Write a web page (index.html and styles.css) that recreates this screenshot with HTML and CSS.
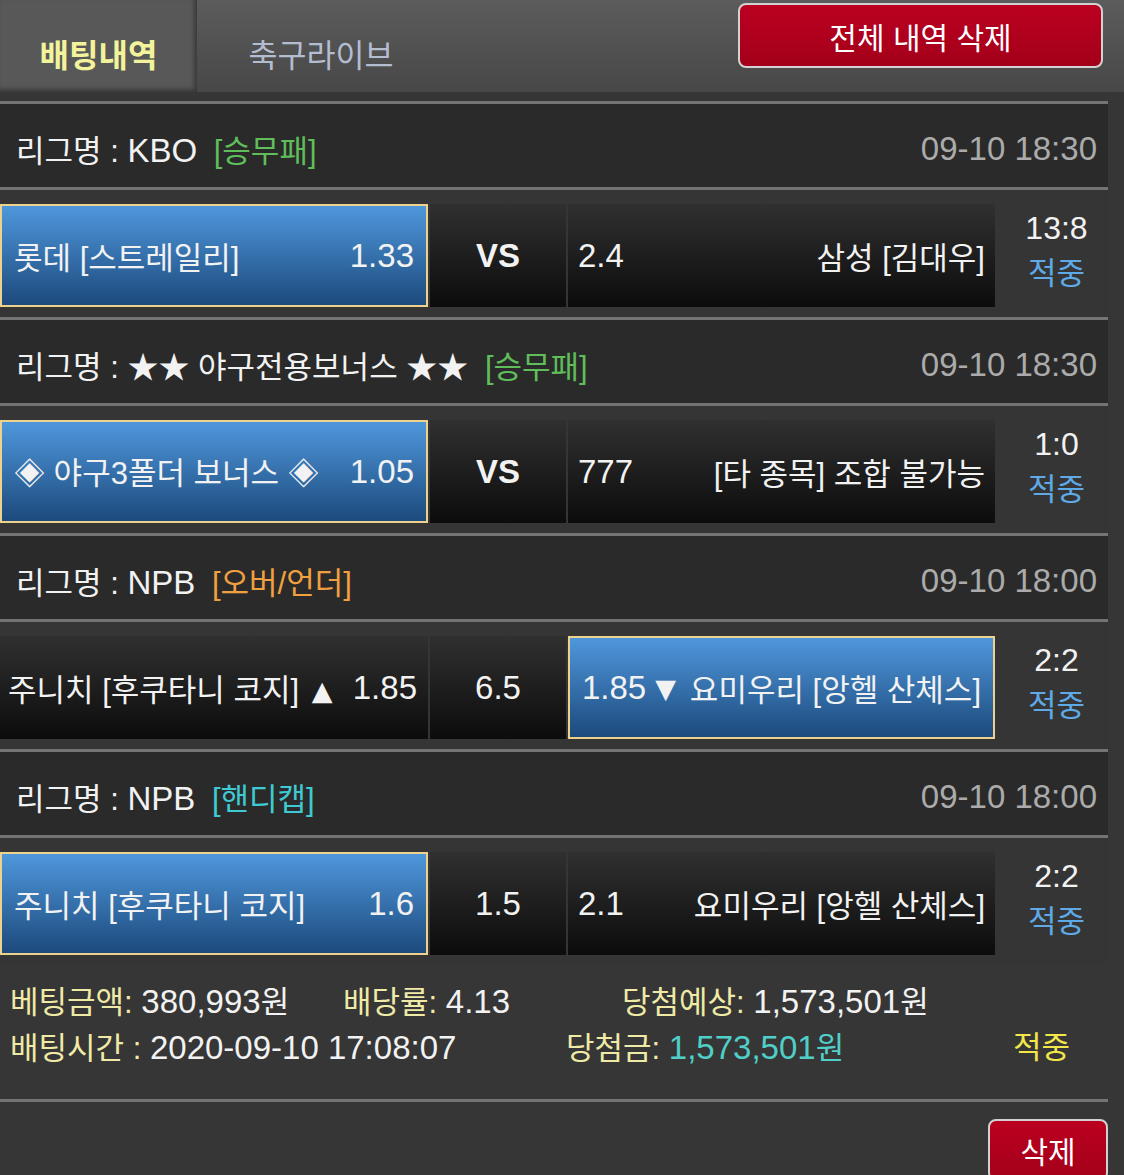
FILE: index.html
```html
<!DOCTYPE html>
<html lang="ko">
<head>
  <meta charset="UTF-8">
  <title>배팅내역</title>
  <link rel="stylesheet" href="styles.css">
</head>
<body>
  <div class="top">
    <div class="tabs">
      <div class="tab on">배팅내역</div>
      <div class="tab">축구라이브</div>
    </div>
    <button class="btn-red btn-all">전체 내역 삭제</button>
  </div>

  <div class="bet">
    <div class="league">
      <span>리그명 : <span class="n">KBO</span> <em class="t-green">[승무패]</em></span>
      <span class="date n">09-10 18:30</span>
    </div>
    <div class="match">
      <div class="cell side pick"><span>롯데 [스트레일리]</span><span class="n">1.33</span></div>
      <div class="cell mid vs n">VS</div>
      <div class="cell side"><span class="n">2.4</span><span>삼성 [김대우]</span></div>
      <div class="score"><div class="n">13:8</div><div class="hit">적중</div></div>
    </div>

    <div class="league">
      <span>리그명 : ★★ 야구전용보너스 ★★ <em class="t-green">[승무패]</em></span>
      <span class="date n">09-10 18:30</span>
    </div>
    <div class="match">
      <div class="cell side pick"><span>◈ 야구3폴더 보너스 ◈</span><span class="n">1.05</span></div>
      <div class="cell mid vs n">VS</div>
      <div class="cell side"><span class="n">777</span><span>[타 종목] 조합 불가능</span></div>
      <div class="score"><div class="n">1:0</div><div class="hit">적중</div></div>
    </div>

    <div class="league">
      <span>리그명 : <span class="n">NPB</span> <em class="t-orange">[오버/언더]</em></span>
      <span class="date n">09-10 18:00</span>
    </div>
    <div class="match">
      <div class="cell side tight"><span>주니치 [후쿠타니 코지] <i class="arw">▲</i></span><span class="n">1.85</span></div>
      <div class="cell mid n">6.5</div>
      <div class="cell side pick"><span><span class="n">1.85</span><i class="arw down">▼</i></span><span>요미우리 [앙헬 산체스]</span></div>
      <div class="score"><div class="n">2:2</div><div class="hit">적중</div></div>
    </div>

    <div class="league">
      <span>리그명 : <span class="n">NPB</span> <em class="t-cyan">[핸디캡]</em></span>
      <span class="date n">09-10 18:00</span>
    </div>
    <div class="match">
      <div class="cell side pick"><span>주니치 [후쿠타니 코지]</span><span class="n">1.6</span></div>
      <div class="cell mid n">1.5</div>
      <div class="cell side"><span class="n">2.1</span><span>요미우리 [앙헬 산체스]</span></div>
      <div class="score"><div class="n">2:2</div><div class="hit">적중</div></div>
    </div>

    <div class="summary">
      <div class="sum-row">
        <span class="c1"><b>베팅금액:</b> <span class="n">380,993</span>원</span>
        <span class="c2"><b>배당률:</b> <span class="n">4.13</span></span>
        <span><b>당첨예상:</b> <span class="n">1,573,501</span>원</span>
      </div>
      <div class="sum-row">
        <span class="c1 wide"><b>배팅시간 :</b> <span class="n">2020-09-10 17:08:07</span></span>
        <span class="c2 wide"><b>당첨금:</b> <i class="won"><span class="n">1,573,501</span>원</i></span>
        <span class="result">적중</span>
      </div>
    </div>
  </div>

  <div class="foot">
    <button class="btn-red btn-del">삭제</button>
  </div>
</body>
</html>
```

FILE: styles.css
```css
body { margin: 0; background: #363636; color: #f2f2f2; font-family: "Liberation Sans", "Noto Sans CJK KR", sans-serif; font-size: 31px; }
em, i, b { font-style: normal; font-weight: normal; }
.n { font-size: 33px; }

.top { height: 92px; display: flex; justify-content: space-between; background: linear-gradient(#5c5c5c, #474747); margin-bottom: 9px; }
.tabs { display: flex; }
.tab { height: 92px; box-sizing: border-box; padding-top: 14px; display: flex; align-items: center; justify-content: center; width: 248px; font-size: 31.5px; color: #b3bdcf; }
.tab.on { width: 197px; background: #585858; color: #f3f39b; font-weight: bold; font-size: 32px; box-shadow: inset -3px -3px 4px rgba(0,0,0,.35); }

.btn-red { font-family: inherit; color: #fff; background: linear-gradient(#bb0020, #a3001a); border: 2px solid #d2d2d2; border-radius: 8px; cursor: pointer; }
.btn-all { width: 365px; height: 65px; margin: 3px 21px 0 0; font-size: 30px; padding: 0; }

.bet { width: 1108px; }
.league { border-top: 3px solid #747474; background: #2a2a2a; display: flex; justify-content: space-between; align-items: center; padding: 6px 11px 0 16px; height: 77px; }
.league em { margin-left: 8px; }
.date { color: #ababab; }
.t-green { color: #5fbd5a; }
.t-orange { color: #f0a040; }
.t-cyan { color: #3fc9d2; }

.match { border-top: 3px solid #747474; height: 130px; box-sizing: border-box; padding-top: 14px; display: grid; grid-template-columns: 428px 136px 427px 1fr; column-gap: 2px; align-items: start; background: #353535; }
.cell { height: 103px; box-sizing: border-box; display: flex; align-items: center; background: linear-gradient(#303030, #0c0c0c); }
.side { justify-content: space-between; padding: 0 10px 0 10px; }
.tight { padding: 0 11px 0 8px; }
.pick { background: linear-gradient(#4f97dc, #1c4a7c); border: 2px solid #ecd28c; padding: 0 12px; }
.mid { justify-content: center; }
.vs { font-weight: bold; }
.arw { font-family: "DejaVu Sans", sans-serif; font-size: 27px; vertical-align: 1px; margin: 0 4px; }
.arw.down { margin-left: 9px; }
.score { height: 103px; box-sizing: border-box; padding: 0 0 10px 8px; display: flex; flex-direction: column; justify-content: center; gap: 6px; align-items: center; line-height: 40px; }
.score .n { font-size: 32px; }
.hit { color: #5ea9e6; }

.summary { padding: 14px 0 28px 10px; border-bottom: 3px solid #747474; }
.sum-row { display: flex; line-height: 45px; }
.sum-row b { color: #efeaa6; }
.c1 { width: 333px; }
.c2 { width: 279px; }
.c1.wide { width: 556px; }
.c2.wide { width: 447px; }
.won { color: #4fcfc8; }
.result { color: #f2e64a; }

.foot { width: 1108px; display: flex; justify-content: flex-end; padding-top: 17px; }
.btn-del { width: 120px; height: 62px; font-size: 30px; padding: 0; }
```
